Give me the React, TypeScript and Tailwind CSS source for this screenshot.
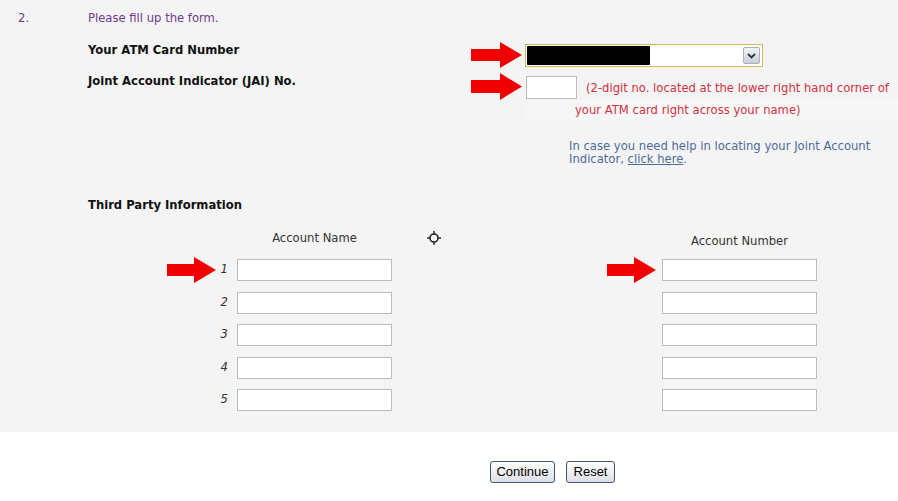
import React from 'react';

function RedArrow({ w = 52, h = 26 }: { w?: number; h?: number }) {
  const head = w - 22;
  const s1 = Math.round(h * 0.25);
  const s2 = h - s1;
  return (
    <svg width={w} height={h} viewBox={`0 0 ${w} ${h}`} className="block">
      <polygon
        points={`1,${s1} ${head},${s1} ${head},0 ${w},${h / 2} ${head},${h} ${head},${s2} 1,${s2}`}
        fill="#f00000"
        strokeLinejoin="round"
      />
    </svg>
  );
}

function Crosshair() {
  return (
    <svg width="14" height="14" viewBox="0 0 14 14" className="block">
      <circle cx="7" cy="7" r="4" fill="none" stroke="#222" strokeWidth="1.6" />
      <line x1="7" y1="0" x2="7" y2="3" stroke="#222" strokeWidth="1.4" />
      <line x1="7" y1="11" x2="7" y2="14" stroke="#222" strokeWidth="1.4" />
      <line x1="0" y1="7" x2="3" y2="7" stroke="#222" strokeWidth="1.4" />
      <line x1="11" y1="7" x2="14" y2="7" stroke="#222" strokeWidth="1.4" />
    </svg>
  );
}

const rows = [1, 2, 3, 4, 5];

export default function App() {
  return (
    <div className="w-[898px] min-h-[501px] bg-white font-['DejaVu_Sans',Verdana,sans-serif] text-[11.6px]">
      <div className="h-[432px] bg-[#f4f4f4] pt-[8px]">
        {/* step header */}
        <div className="flex leading-[20px] text-[#6d3a8e]">
          <div className="w-[88px] pl-[18px]">2.</div>
          <div>Please fill up the form.</div>
        </div>

        {/* ATM card number */}
        <div className="mt-[14px] flex items-start">
          <div className="w-[88px]" />
          <div className="w-[382px] pt-[1px] font-bold leading-[14px] text-[#111]">Your ATM Card Number</div>
          <RedArrow w={52} h={26} />
          <div className="ml-[3px] mt-[2px] flex h-[23px] w-[238px] items-center border border-[#e2b35c] bg-white pl-[1px] pr-[2px]">
            <div className="h-[19px] w-[123px] rounded-[1px] bg-black" />
            <div className="flex-1" />
            <div className="flex h-[17px] w-[17px] items-center justify-center rounded-[2px] border border-[#a9b1bb] bg-gradient-to-b from-[#f2f4f7] to-[#c9d0d9]">
              <svg width="9" height="6" viewBox="0 0 9 6">
                <path d="M1 1 L4.5 4.5 L8 1" fill="none" stroke="#2b3340" strokeWidth="1.8" />
              </svg>
            </div>
          </div>
        </div>

        {/* JAI */}
        <div className="mt-[5px] flex items-start">
          <div className="w-[88px]" />
          <div className="w-[382px] pt-[1px] font-bold leading-[14px] text-[#111]">Joint Account Indicator (JAI) No.</div>
          <RedArrow w={52} h={27} />
          <input className="ml-[4px] mt-[3px] h-[23px] w-[51px] border border-[#b9bdc1] bg-white outline-none" />
          <div className="ml-[9px] whitespace-nowrap pt-[8px] leading-[14px] text-[#d3313f]">
            (2-digit no. located at the lower right hand corner of
          </div>
        </div>
        <div className="ml-[525px] h-[21px] bg-[#f7f7f7] pl-[50px] leading-[21px] text-[#d3313f]">
          your ATM card right across your name)
        </div>

        {/* help text */}
        <div className="ml-[569px] mt-[19px] w-[320px] leading-[13px] text-[#4f6b9c]">
          <div>In case you need help in locating your Joint Account</div>
          <div>
            Indicator, <span className="underline">click here</span>.
          </div>
        </div>

        {/* third party */}
        <div className="ml-[88px] mt-[32px] font-bold leading-[14px] text-[#111]">Third Party Information</div>

        <div className="mt-[19px] flex items-start leading-[14px] text-[#333]">
          <div className="ml-[237px] w-[155px] text-center">Account Name</div>
          <div className="ml-[35px]">
            <Crosshair />
          </div>
          <div className="ml-[221px] w-[155px] pt-[3px] text-center">Account Number</div>
        </div>

        <div className="mt-[11px] flex flex-col gap-[10.5px]">
          {rows.map((n) => (
            <div key={n} className="flex h-[22px] items-center">
              <div className="ml-[166px] w-[50px]">{n === 1 && <RedArrow w={50} h={26} />}</div>
              <div className="w-[12px] text-right italic text-[#333]">{n}</div>
              <input className="ml-[9px] h-[22px] w-[155px] border border-[#b9bcbf] bg-white outline-none" />
              <div className="ml-[214px] w-[50px]">{n === 1 && <RedArrow w={50} h={26} />}</div>
              <input className="ml-[6px] h-[22px] w-[155px] border border-[#b9bcbf] bg-white outline-none" />
            </div>
          ))}
        </div>
      </div>

      {/* buttons */}
      <div className="mt-[29px] flex gap-[11px] pl-[490px] font-['Liberation_Sans',Arial,sans-serif] text-[13px] text-black">
        <button className="h-[22px] w-[65px] rounded-[3px] border border-[#3d5877] bg-gradient-to-b from-white to-[#dcdfe6] leading-[20px]">
          Continue
        </button>
        <button className="h-[22px] w-[49px] rounded-[3px] border border-[#3d5877] bg-gradient-to-b from-white to-[#dcdfe6] leading-[20px]">
          Reset
        </button>
      </div>
    </div>
  );
}
